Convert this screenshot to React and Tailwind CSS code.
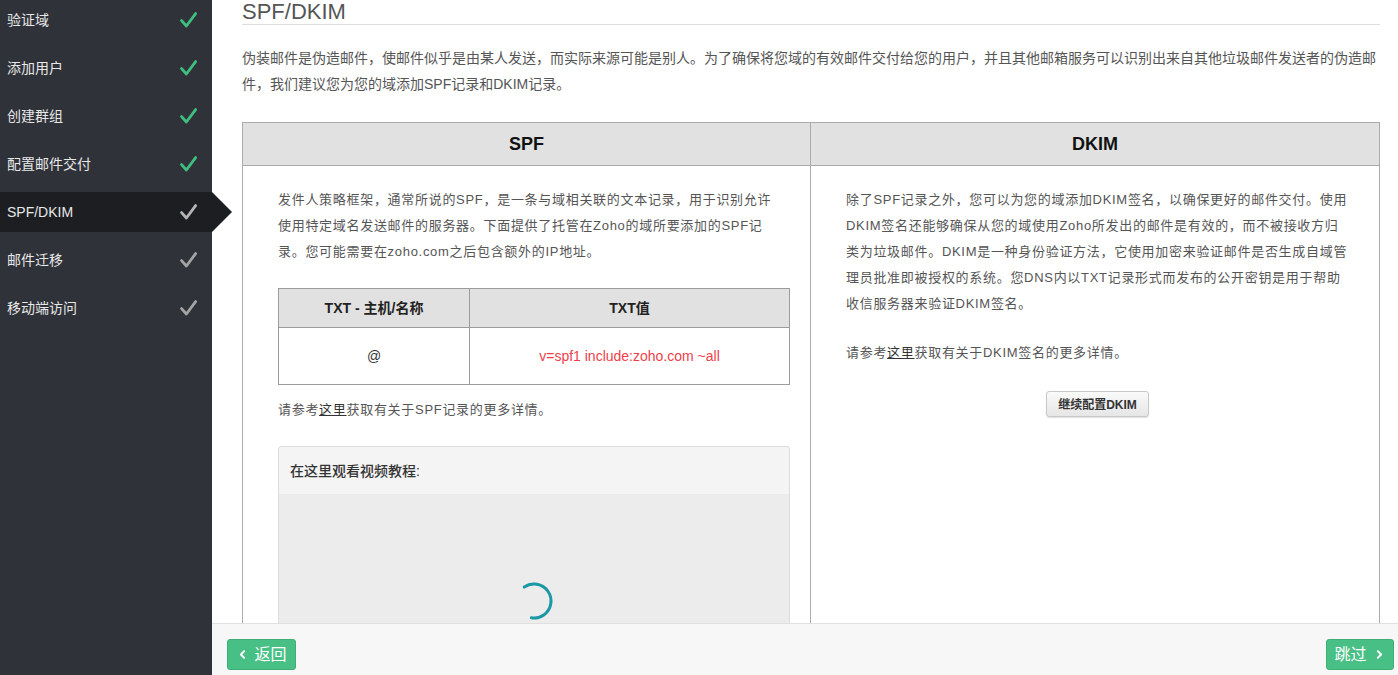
import { ChevronLeft, ChevronRight } from 'lucide-react'

const steps = [
  { label: '验证域', done: true },
  { label: '添加用户', done: true },
  { label: '创建群组', done: true },
  { label: '配置邮件交付', done: true },
  { label: 'SPF/DKIM', active: true },
  { label: '邮件迁移' },
  { label: '移动端访问' },
]

function Tick({ color }) {
  return (
    <svg width="17" height="16" viewBox="0 0 17 16" fill="none">
      <path d="M1.6 8.6 L6.4 14 L15.6 1.6" stroke={color} strokeWidth="2.8" strokeLinecap="round" strokeLinejoin="round" />
    </svg>
  )
}

function Spinner() {
  return (
    <svg width="40" height="40" viewBox="0 0 40 40" fill="none">
      <circle cx="20" cy="20" r="17" stroke="#1b98a5" strokeWidth="3" strokeDasharray="66 200"
        transform="rotate(-125 20 20)" strokeLinecap="round" />
    </svg>
  )
}

export default function App() {
  return (
    <div className="flex h-[675px] w-[1398px] overflow-hidden bg-white font-['Liberation_Sans','Noto_Sans_CJK_SC',sans-serif]">
      {/* Sidebar */}
      <aside className="w-[212px] shrink-0 bg-[#2f3239]">
        {steps.map(s => (
          <div key={s.label}
            className={`relative mb-[8px] flex h-[40px] items-center justify-between pl-[7px] pr-[15px] text-[14px] text-[#e8e8e8] ${s.active ? 'bg-[#1d1e22]' : ''}`}>
            <span>{s.label}</span>
            <Tick color={s.done ? '#3fbf7f' : s.active ? '#b5b5b5' : '#a4a4a4'} />
            {s.active && (
              <span className="absolute left-full top-0 h-0 w-0 border-y-[20px] border-l-[20px] border-y-transparent border-l-[#1d1e22]" />
            )}
          </div>
        ))}
      </aside>

      <div className="flex min-w-0 flex-1 flex-col">
        <main className="min-h-0 flex-1 overflow-hidden pl-[30px] pr-[18px]">
          <h1 className="border-b border-[#dedede] text-[22px] leading-[24px] text-[#555]">SPF/DKIM</h1>
          <p className="mt-[20px] text-[14px] leading-[26px] text-[#555]">
            伪装邮件是伪造邮件，使邮件似乎是由某人发送，而实际来源可能是别人。为了确保将您域的有效邮件交付给您的用户，并且其他邮箱服务可以识别出来自其他垃圾邮件发送者的伪造邮件，我们建议您为您的域添加SPF记录和DKIM记录。
          </p>

          <div className="mt-[25px] grid grid-cols-2 border border-[#ababab]">
            <div className="flex h-[43px] items-center justify-center border-b border-r border-[#ababab] bg-[#e1e1e1] text-[18px] font-bold text-[#111]">SPF</div>
            <div className="flex h-[43px] items-center justify-center border-b border-[#ababab] bg-[#e1e1e1] text-[18px] font-bold text-[#111]">DKIM</div>

            {/* SPF */}
            <div className="h-[520px] border-r border-[#ababab] pl-[35px] pr-[26px] pt-[21px] text-[13px] leading-[26px] tracking-[0.7px] text-[#555]">
              <p>发件人策略框架，通常所说的SPF，是一条与域相关联的文本记录，用于识别允许使用特定域名发送邮件的服务器。下面提供了托管在Zoho的域所要添加的SPF记录。您可能需要在zoho.com之后包含额外的IP地址。</p>

              <div className="mt-[23px] grid w-[512px] grid-cols-[191px_1fr] border border-[#9c9c9c] tracking-normal">
                <div className="flex h-[39px] items-center justify-center border-b border-r border-[#9c9c9c] bg-[#e1e1e1] text-[14px] font-bold text-[#222]">TXT - 主机/名称</div>
                <div className="flex h-[39px] items-center justify-center border-b border-[#9c9c9c] bg-[#e1e1e1] text-[14px] font-bold text-[#222]">TXT值</div>
                <div className="flex h-[56px] items-center justify-center border-r border-[#9c9c9c] text-[14px] text-[#333]">@</div>
                <div className="flex h-[56px] items-center justify-center text-[14px] text-[#ee3f4a]">v=spf1 include:zoho.com ~all</div>
              </div>

              <p className="mt-[12px]">请参考<span className="text-[#333] underline">这里</span>获取有关于SPF记录的更多详情。</p>

              <div className="mt-[23px] w-[512px] overflow-hidden rounded-[3px] border border-[#dcdcdc] bg-[#f4f4f4] tracking-normal">
                <div className="flex h-[47px] items-center pl-[11px] text-[14px] font-medium text-[#333]">在这里观看视频教程:</div>
                <div className="flex h-[220px] justify-center bg-[#ececec] pt-[87px]">
                  <Spinner />
                </div>
              </div>
            </div>

            {/* DKIM */}
            <div className="pl-[35px] pr-[30px] pt-[21px] text-[13px] leading-[26px] tracking-[0.7px] text-[#555]">
              <p>除了SPF记录之外，您可以为您的域添加DKIM签名，以确保更好的邮件交付。使用DKIM签名还能够确保从您的域使用Zoho所发出的邮件是有效的，而不被接收方归类为垃圾邮件。DKIM是一种身份验证方法，它使用加密来验证邮件是否生成自域管理员批准即被授权的系统。您DNS内以TXT记录形式而发布的公开密钥是用于帮助收信服务器来验证DKIM签名。</p>
              <p className="mt-[23px]">请参考<span className="text-[#333] underline">这里</span>获取有关于DKIM签名的更多详情。</p>
              <div className="mt-[25px] flex justify-center">
                <button className="h-[26px] w-[103px] rounded-[3px] border border-[#c8c8c8] bg-gradient-to-b from-[#fafafa] to-[#e6e6e6] text-[12px] font-bold tracking-normal text-[#333] shadow-[0_1px_1px_rgba(0,0,0,0.12)]">
                  继续配置DKIM
                </button>
              </div>
            </div>
          </div>
        </main>

        <footer className="flex h-[52px] shrink-0 items-start justify-between border-t border-[#e0e0e0] bg-[#f7f7f7] pl-[15px] pr-[4px] pt-[15px]">
          <button className="flex h-[31px] w-[69px] items-center justify-center gap-[5px] rounded-[3px] border border-[#3fae77] bg-[#48bf85] text-[16px] text-white">
            <ChevronLeft size={13} strokeWidth={3.5} />返回
          </button>
          <button className="flex h-[31px] w-[68px] items-center justify-center gap-[6px] rounded-[3px] border border-[#3fae77] bg-[#48bf85] text-[16px] text-white">
            跳过<ChevronRight size={13} strokeWidth={3.5} />
          </button>
        </footer>
      </div>
    </div>
  )
}
